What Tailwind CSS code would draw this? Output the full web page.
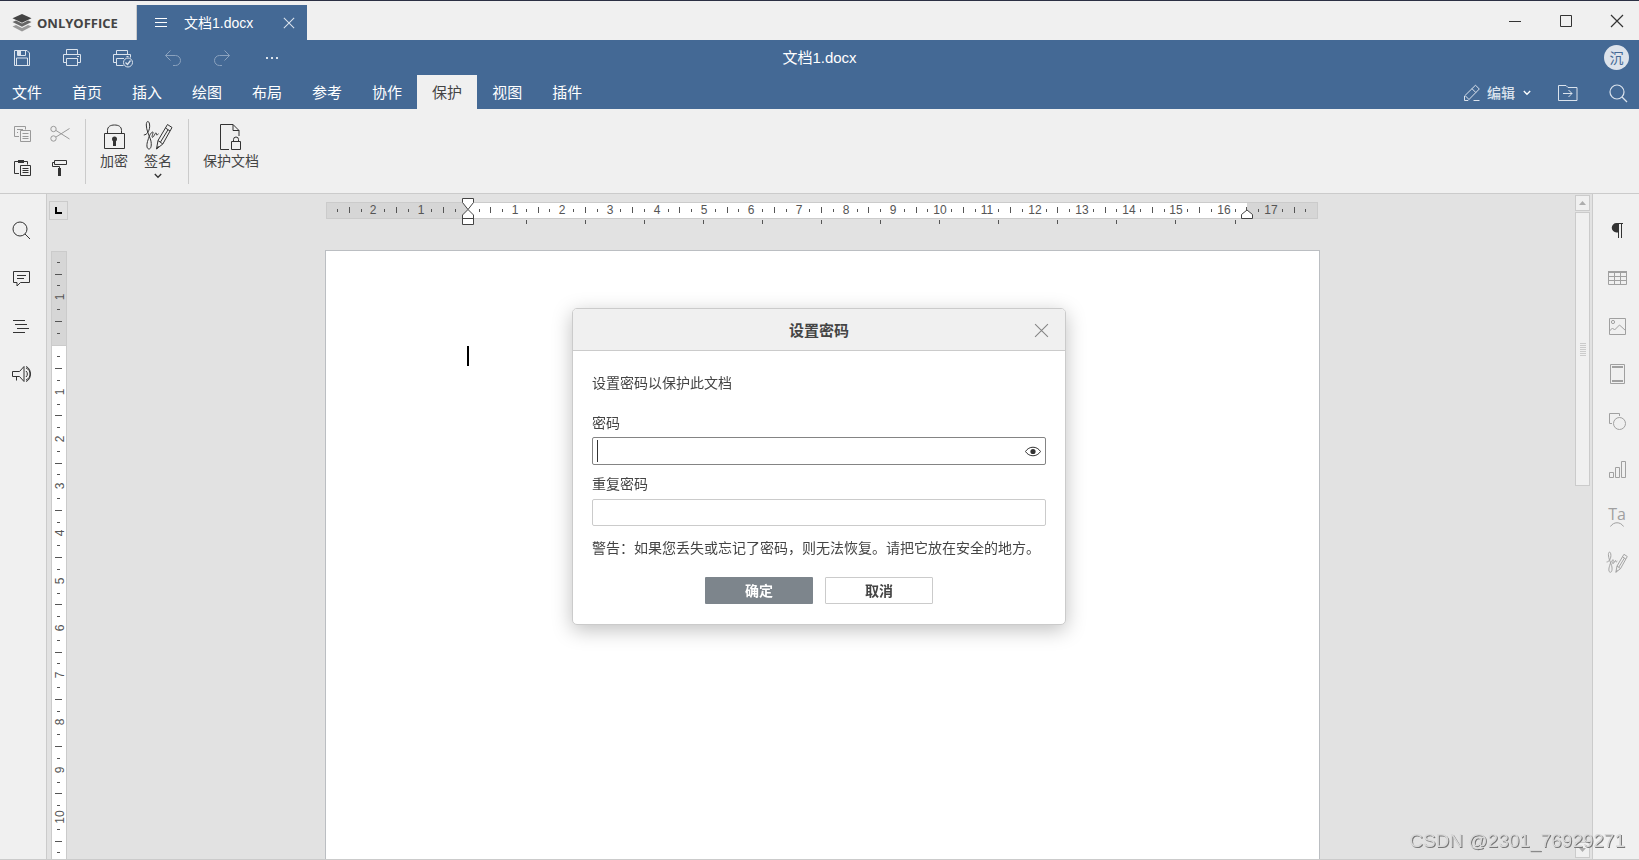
<!DOCTYPE html>
<html lang="zh-CN">
<head>
  <meta charset="UTF-8" />
  <meta name="viewport" content="width=device-width, initial-scale=1.0" />
  <title>文档1.docx - ONLYOFFICE</title>
  <script src="https://cdn.jsdelivr.net/npm/@tailwindcss/browser@4"></script>
</head>
<body class="h-screen flex flex-col overflow-hidden bg-[#f0f0f0] text-[#444] text-[14px] leading-5 font-['Liberation_Sans','Noto_Sans_CJK_SC',sans-serif]">

  <!-- shared icons -->
  <svg class="hidden">
    <symbol id="i-sign" viewBox="0 0 30 30">
      <path d="M.8 15C4 15 7.500 10 6.500 4 5.800.2 3.300.8 3.300 5 3.300 10 6 15 7.700 20 9 25 8 29 6 29 3.300 29 3.500 24 5 20 6 16 8 12.500 9.500 12 11.200 11.500 8 17.300 9.500 17.300 11 17.300 12 12.300 13.200 13 14 14 12.500 16.500 15.500 13.800M13.500 29 15 20.500 24.500 4.500 29 7.500 19.800 24ZM15 20.500 19.800 24M22.500 8 27 11M17.500 22 25 9.800M13.500 29 15.500 26" />
    </symbol>
    <symbol id="i-search" viewBox="-.5 -.5 20 20">
      <circle cx="8.500" cy="8.500" r="7" /><path d="M13.500 13.500 18.500 18.500" />
    </symbol>
    <symbol id="i-chevron" viewBox="0 0 8 6"><path d="M.8 1 4 4.300 7.200 1" /></symbol>
    <symbol id="i-close" viewBox="0 0 14 14"><path d="M1 1 13 13M13 1 1 13" /></symbol>
  </svg>

  <!-- title bar -->
  <div class="h-10 shrink-0 flex items-stretch border-t border-[#2b3044]">
    <a href="#" class="w-[137px] mt-1 flex items-center pl-3 gap-[5px] border-r border-[#cbcbcb]">
      <svg class="w-5 h-[18px]" viewBox="0 0 20 18">
        <path d="M10 0 19.500 4.300 10 8.800.5 4.300Z" fill="#444" />
        <path d="M.5 8 4 6.600 10 9.600 16 6.600 19.500 8 10 12.700Z" fill="#666" />
        <path d="M.5 12.500 4 11 10 14 16 11 19.500 12.500 10 17.500Z" fill="#999" />
      </svg>
      <span class="font-['Open_Sans'] font-bold text-[13px]">ONLYOFFICE</span>
    </a>
    <div class="w-[170px] mt-1 flex items-center bg-[#446995] text-white pl-[18px] pr-3">
      <svg class="w-3 h-3" viewBox="0 0 12 12" stroke="#fff"><path d="M0 1.500h12M0 5.500h12M0 9.500h12" /></svg>
      <span class="ml-[17px] flex-1">文档1.docx</span>
      <button aria-label="关闭标签"><svg class="w-3 h-3" stroke="#dbe3ed" stroke-width="1.200" fill="none"><use href="#i-close" /></svg></button>
    </div>
    <div class="flex-1"></div>
    <div class="flex gap-[7px] text-[#333]">
      <button aria-label="最小化" class="w-11 grid place-items-center"><svg class="w-[14px] h-[14px]" viewBox="0 0 14 14" stroke="currentColor"><path d="M1 7.500h12" /></svg></button>
      <button aria-label="最大化" class="w-11 grid place-items-center"><svg class="w-[14px] h-[14px]" viewBox="0 0 14 14" stroke="currentColor" fill="none"><path d="M1.500 1.500h11v11h-11z" /></svg></button>
      <button aria-label="关闭" class="w-11 grid place-items-center"><svg class="w-[14px] h-[14px]" stroke="currentColor" stroke-width="1.200" fill="none"><use href="#i-close" /></svg></button>
    </div>
  </div>

  <!-- header -->
  <header class="shrink-0 bg-[#446995] text-white">
    <div class="h-[35px] grid grid-cols-[1fr_auto_1fr] items-center">
      <div class="flex gap-6 pl-[9px] text-[#dbe3ed]">
        <button aria-label="保存" class="w-[26px] h-[26px] grid place-items-center">
          <svg class="w-5 h-5" viewBox="0 0 20 20" stroke="currentColor" fill="none"><path d="M2.500 2.500h12.500l2.500 2.500v12.500h-15zM4.500 17.500v-7.500h11v7.500M5.500 2.500v5h8v-5" /><path d="M6 3h3v4H6z" fill="currentColor" stroke="none" /></svg>
        </button>
        <button aria-label="打印" class="w-[26px] h-[26px] grid place-items-center">
          <svg class="w-5 h-5" viewBox="0 0 20 20" stroke="currentColor" fill="none"><path d="M4.500 6.500v-5h11v5M4.500 14.500h-3v-8h17v8h-3M4.500 10.500h11v7h-11zM15 8.500h2" /></svg>
        </button>
        <button aria-label="快速打印" class="w-[26px] h-[26px] grid place-items-center">
          <svg class="w-5 h-5 overflow-visible" viewBox="0 0 20 20" stroke="currentColor" fill="none"><path d="M4.500 7v-4.500h11v4.500M4.500 14.500h-3v-8h17v3M12 10.500h-7.500v7h7M14.500 8.500h2" /><circle cx="16" cy="14.500" r="4.500" /><path d="M13.500 14.500 15.500 16.500 18.500 12.500" stroke-width="1.300" /></svg>
        </button>
        <button aria-label="撤消" class="w-[26px] h-[26px] grid place-items-center text-[#8ba2be]">
          <svg class="w-5 h-5" viewBox="0 0 20 20" stroke="currentColor" fill="none"><path d="M8.500 2.500 3.500 7.500 8.500 12.500M3.500 7.500h10a5 5 0 0 1 0 10H11" /></svg>
        </button>
        <button aria-label="重做" class="w-[26px] h-[26px] grid place-items-center text-[#8ba2be]">
          <svg class="w-5 h-5" viewBox="0 0 20 20" stroke="currentColor" fill="none"><path d="M12.500 2.500 17.500 7.500 12.500 12.500M17.500 7.500H7.500a5 5 0 0 0 0 10H10" /></svg>
        </button>
        <button aria-label="更多" class="w-[26px] h-[26px] grid place-items-center">
          <svg class="w-5 h-5" viewBox="0 0 20 20" fill="currentColor"><path d="M4 9h2v2H4zM9 9h2v2H9zM14 9h2v2h-2z" /></svg>
        </button>
      </div>
      <h1 class="text-[15px]">文档1.docx</h1>
      <div class="flex justify-end pr-[10px]">
        <button class="w-[25px] h-[25px] rounded-full bg-[#dde3eb] text-[#446995] grid place-items-center">沉</button>
      </div>
    </div>
    <div class="h-[34px] flex items-stretch">
      <nav class="flex text-[15px]">
        <button class="pl-3 pr-[15px] pt-px">文件</button>
        <button class="px-[15px] pt-px">首页</button>
        <button class="px-[15px] pt-px">插入</button>
        <button class="px-[15px] pt-px">绘图</button>
        <button class="px-[15px] pt-px">布局</button>
        <button class="px-[15px] pt-px">参考</button>
        <button class="px-[15px] pt-px">协作</button>
        <button class="px-[15px] pt-px bg-[#f0f0f0] text-[#444]">保护</button>
        <button class="px-[15px] pt-px">视图</button>
        <button class="px-[15px] pt-px">插件</button>
      </nav>
      <div class="flex-1"></div>
      <div class="flex items-center pt-px pr-[11px] text-[#dbe3ed]">
        <button class="flex items-center mr-[27px]">
          <svg class="w-[18px] h-[18px] mr-[6px]" viewBox="0 0 18 18" stroke="currentColor" fill="none"><path d="M1.500 16.500v-4.500L12.500 1.200 16.300 5 5 16.500ZM9 4.700 12.800 8.500M2.500 12 5.500 15M10.500 16.500h6" /></svg>
          <span class="font-medium">编辑</span>
          <svg class="w-2 h-[6px] ml-2" stroke="#fff" stroke-width="1.300" fill="none"><use href="#i-chevron" /></svg>
        </button>
        <button aria-label="打开文件位置" class="mr-[30px]">
          <svg class="w-5 h-[18px]" viewBox="0 0 20 18" stroke="currentColor" fill="none"><path d="M.5 16.500v-15h7.500l2 2h9v13zM5 9.500h9M10.500 6l3.500 3.500-3.500 3.500" /></svg>
        </button>
        <button aria-label="搜索"><svg class="w-5 h-5" stroke="currentColor" stroke-width="1.200" fill="none"><use href="#i-search" /></svg></button>
      </div>
    </div>
  </header>

  <!-- ribbon -->
  <div class="h-[85px] shrink-0 flex items-center border-b border-[#cbcbcb] text-[#333]">
    <div class="grid grid-cols-2 gap-x-[9px] gap-y-[6px] pl-[9px] pr-[11px]">
      <button aria-label="复制" class="w-7 h-7 grid place-items-center text-[#999]">
        <svg class="w-[18px] h-[18px]" viewBox="0 0 18 18" stroke="currentColor" fill="none"><path d="M5 11.500H.5V1.500h11v3M3 4.500h6M3 7.500h1M6.500 5.500h10v11h-10zM8.500 8.500h6M8.500 11.500h6M8.500 13.500h6" /></svg>
      </button>
      <button aria-label="剪切" class="w-7 h-7 grid place-items-center text-[#999]">
        <svg class="w-5 h-[18px]" viewBox="0 0 20 18" stroke="currentColor" fill="none"><circle cx="3.500" cy="4" r="2.700" /><circle cx="3.500" cy="13.500" r="2.700" /><path d="M6 5.500 19.500 14M6 12 19.500 3.500" /></svg>
      </button>
      <button aria-label="粘贴" class="w-7 h-7 grid place-items-center">
        <svg class="w-[18px] h-[18px]" viewBox="0 0 18 18" stroke="currentColor" fill="none"><path d="M5 14.500H.5V2.500h3.500M10 2.500h3.500v3M6.500 6.500h10v10h-10zM8.500 9.500h6M8.500 11.500h6M8.500 13.500h6" /><path d="M4 1h6v3H4z" fill="currentColor" stroke="none" /></svg>
      </button>
      <button aria-label="复制格式" class="w-7 h-7 grid place-items-center">
        <svg class="w-[18px] h-[18px]" viewBox="0 0 18 18" stroke="currentColor" fill="none"><path d="M3.500 1.500h12v4h-12zM3.500 3.500h-2v4h7v2" /><path d="M7 9h3v8H7z" fill="currentColor" stroke="none" /></svg>
      </button>
    </div>
    <div class="w-px h-[65px] bg-[#cbcbcb]"></div>
    <button class="h-[65px] ml-[13px] flex flex-col items-center">
      <svg class="w-[30px] h-8" viewBox="0 0 30 32" stroke="currentColor" fill="none"><path d="M5.500 14.500h20v15h-20zM8.500 14.500v-3c0-4 3-5.500 7-5.500s7 1.500 7 5.500v3" /><circle cx="15.500" cy="20" r="2.500" fill="currentColor" stroke="none" /><path d="M14 21h3v6h-3z" fill="currentColor" stroke="none" /></svg>
      <span class="text-[#444]">加密</span>
    </button>
    <button class="h-[65px] ml-[14px] flex flex-col items-center">
      <svg class="w-[30px] h-8" stroke="currentColor" fill="none"><use href="#i-sign" /></svg>
      <span class="text-[#444]">签名</span>
      <svg class="w-2 h-[6px] mt-[2px]" stroke="currentColor" stroke-width="1.300" fill="none"><use href="#i-chevron" /></svg>
    </button>
    <div class="w-px h-[65px] bg-[#cbcbcb] ml-[15px]"></div>
    <button class="h-[65px] ml-[14px] flex flex-col items-center">
      <svg class="w-[30px] h-8" viewBox="0 0 30 32" stroke="currentColor" fill="none"><path d="M13 30.500H4.500v-25H17l6 6V17M17 5.500v6h6M15.500 22.500h9v8h-9zM17.500 22.500v-2a2.500 2.500 0 0 1 5 0v2" /></svg>
      <span class="text-[#444]">保护文档</span>
    </button>
  </div>

  <!-- workspace -->
  <main class="flex-1 min-h-0 flex border-b border-[#cbcbcb] bg-[#e2e2e2]">
    <aside class="w-[47px] shrink-0 pt-3 flex flex-col border-r border-[#cbcbcb] bg-[#f0f0f0] text-[#333]">
      <button aria-label="查找" class="w-[42px] h-12 grid place-items-center"><svg class="w-5 h-5" stroke="currentColor" fill="none"><use href="#i-search" /></svg></button>
      <button aria-label="批注" class="w-[42px] h-12 grid place-items-center">
        <svg class="w-5 h-5" viewBox="0 0 20 20" stroke="currentColor" fill="none"><path d="M2.500 3.500h16v11H9.500L6 18v-3.500h-3.500zM6 7.500h9M6 10.500h7" /></svg>
      </button>
      <button aria-label="标题" class="w-[42px] h-12 grid place-items-center">
        <svg class="w-5 h-5" viewBox="0 0 20 20" stroke="currentColor" fill="none"><path d="M2 4.500h12M4 8.500h12M6 12.500h12M2 16.500h12" /></svg>
      </button>
      <button aria-label="反馈" class="w-[42px] h-12 grid place-items-center">
        <svg class="w-5 h-5" viewBox="0 0 20 20" stroke="currentColor" fill="none"><path d="M1.500 7.500h7l4.500-5v15l-4.500-5h-7zM5.500 12.500v4M15 4a6.500 6.500 0 0 1 0 12M15 7a4 4 0 0 1 0 6M15 2.500c6 2 6 13 0 15" /></svg>
      </button>
    </aside>

    <div class="w-[23px] shrink-0 pl-[2px] pt-[7px] flex flex-col">
      <button aria-label="制表位" class="w-[19px] h-[19px] shrink-0 border border-[#cbcbcb] grid place-items-center">
        <svg class="w-[7px] h-[7px]" viewBox="0 0 7 7" fill="#000"><path d="M0 0h2v5h5v2H0z" /></svg>
      </button>
      <div class="flex-1 min-h-0 w-4 mt-[31px] ml-[2px] overflow-hidden border-x border-t border-[#cbcbcb] bg-white">
        <svg id="ruler-v" class="block w-[14px] h-full" fill="#555"></svg>
      </div>
    </div>

    <div class="flex-1 min-w-0 flex flex-col items-center overflow-hidden">
      <svg id="ruler-h" class="w-[995px] h-14 shrink-0" fill="#555"></svg>
      <div class="w-[995px] flex-1 border-x border-t border-[#bbbec2] bg-white pl-[141px] pt-[95px]">
        <div class="w-[2px] h-5 bg-black"></div>
      </div>
    </div>

    <!-- scrollbar -->
    <div class="w-[17px] shrink-0 pr-[2px] py-px flex flex-col">
      <button aria-label="向上滚动" class="h-4 border border-[#cbcbcb] bg-[#f0f0f0] grid place-items-center"><svg class="w-[7px] h-1" viewBox="0 0 7 4" fill="#adadad"><path d="M0 4 3.500 0 7 4z" /></svg></button>
      <div class="h-[274px] mt-px border border-[#cbcbcb] bg-[#f0f0f0] grid place-items-center">
        <svg class="w-[6px] h-[13px]" viewBox="0 0 6 13" stroke="#cbcbcb"><path d="M0 .5h6M0 2.500h6M0 4.500h6M0 6.500h6M0 8.500h6M0 10.500h6M0 12.500h6" /></svg>
      </div>
      <div class="flex-1"></div>
      <button aria-label="向下滚动" class="h-4 border border-[#cbcbcb] bg-[#f0f0f0] grid place-items-center"><svg class="w-[7px] h-1" viewBox="0 0 7 4" fill="#adadad"><path d="M0 0 3.500 4 7 0z" /></svg></button>
    </div>

    <aside class="w-[47px] shrink-0 pt-3 pl-[2px] flex flex-col border-l border-[#cbcbcb] bg-[#f0f0f0] text-[#a0a0a0]">
      <button aria-label="段落设置" class="w-11 h-12 grid place-items-center text-[#333]">
        <svg class="w-5 h-5" viewBox="0 0 20 20" fill="currentColor"><path d="M9.500 3H16v1h-1v14h-1V4h-2v14h-1v-5.500H9.500A4.500 4.500 0 0 1 9.500 3z" /></svg>
      </button>
      <button aria-label="表格设置" class="w-11 h-12 grid place-items-center">
        <svg class="w-5 h-5" viewBox="0 0 20 20" stroke="currentColor" fill="none"><path d="M1.500 4.500h18v12h-18zM1.500 8.500h18M1.500 12.500h18M7.500 4v12M13.500 4v12" /><path d="M1 3h19v2H1z" fill="currentColor" stroke="none" /></svg>
      </button>
      <button aria-label="图像设置" class="w-11 h-12 grid place-items-center">
        <svg class="w-5 h-5" viewBox="0 0 20 20" stroke="currentColor" fill="none"><path d="M2.500 2.500h16v16h-16zM2.500 15l3-3 2 2 5-5 6 5.500" /><circle cx="6" cy="6" r="1.600" /></svg>
      </button>
      <button aria-label="页眉和页脚设置" class="w-11 h-12 grid place-items-center">
        <svg class="w-5 h-5" viewBox="0 0 20 20" stroke="currentColor" fill="none"><path d="M3.500.5h14v19h-14z" /><path d="M5 2h11v2H5zM5 16h11v2H5z" fill="currentColor" stroke="none" /></svg>
      </button>
      <button aria-label="形状设置" class="w-11 h-12 grid place-items-center">
        <svg class="w-5 h-5" viewBox="0 0 20 20" stroke="currentColor" fill="none"><path d="M5 11.500H2.500v-10h10V4" /><circle cx="12.500" cy="11.500" r="6" /></svg>
      </button>
      <button aria-label="图表设置" class="w-11 h-12 grid place-items-center">
        <svg class="w-5 h-5" viewBox="0 0 20 20" stroke="currentColor" fill="none"><path d="M2.500 12.500h4v5h-4zM8.500 7.500h4v10h-4zM14.500 1.500h4v16h-4z" /></svg>
      </button>
      <button aria-label="艺术字设置" class="w-11 h-11 flex flex-col items-center justify-center">
        <span class="font-['Open_Sans'] text-[16px] leading-4">Ta</span>
        <svg class="w-[14px] h-[5px]" viewBox="0 0 14 5" stroke="currentColor" fill="none"><path d="M.5 4.500c3-5 10-5 13 0" /></svg>
      </button>
      <button aria-label="签名设置" class="w-11 h-12 grid place-items-center">
        <svg class="w-[22px] h-[22px]" stroke="currentColor" stroke-width="1.300" fill="none"><use href="#i-sign" /></svg>
      </button>
    </aside>
  </main>

  <!-- password dialog -->
  <div class="fixed inset-0 flex items-start justify-center pt-[308px] pr-px">
    <form role="dialog" aria-labelledby="dlg-title" class="w-[494px] overflow-hidden rounded-[5px] border border-[#cbcbcb] bg-white shadow-[0_5px_20px_rgba(0,0,0,0.25)]">
      <div class="h-[42px] pt-[2px] relative flex items-center justify-center border-b border-[#cbcbcb] bg-[#f0f0f0]">
        <h2 id="dlg-title" class="text-[15px] font-bold">设置密码</h2>
        <button type="button" aria-label="关闭" class="absolute right-4"><svg class="w-[15px] h-[15px]" stroke="#858585" fill="none"><use href="#i-close" /></svg></button>
      </div>
      <div class="px-[19px] pt-[22px] pb-5">
        <p>设置密码以保护此文档</p>
        <label for="password" class="block mt-5">密码</label>
        <div class="relative mt-1">
          <input type="password" id="password" class="block w-full h-7 rounded-[2px] border border-[#848484] bg-white pl-1 pr-8 outline-none" />
          <span class="absolute left-[5px] top-[3px] w-px h-[22px] bg-[#333]"></span>
          <button type="button" aria-label="显示密码" class="absolute right-[5px] top-[9px]">
            <svg class="w-4 h-[11px]" viewBox="0 0 16 11" stroke="#333" fill="none"><path d="M.5 5.500C4-.2 12-.2 15.500 5.500 12 11.200 4 11.200.5 5.500z" /><circle cx="8" cy="5.500" r="2.600" fill="#333" stroke="none" /></svg>
          </button>
        </div>
        <label for="repeat" class="block mt-[9px]">重复密码</label>
        <input type="password" id="repeat" class="block w-full h-[27px] mt-[5px] rounded-[2px] border border-[#cbcbcb] bg-white px-1" />
        <p class="mt-3 whitespace-nowrap">警告：如果您丢失或忘记了密码，则无法恢复。请把它放在安全的地方。</p>
        <div class="mt-[19px] flex justify-center gap-3 font-bold">
          <button type="submit" class="w-[108px] h-[27px] rounded-[1px] bg-[#7d858c] text-white">确定</button>
          <button type="button" class="w-[108px] h-[27px] rounded-[1px] border border-[#cbcbcb] bg-white">取消</button>
        </div>
      </div>
    </form>
  </div>

  <div class="fixed right-[14px] bottom-[7px] text-[19px] leading-6 text-[#d8d8d8] [text-shadow:1px_1px_0_#777]">CSDN @2301_76929271</div>

  <script>
    const CM = 120 / 2.54; // px per cm at 125%
    const NS = "http://www.w3.org/2000/svg";

    function add(parent, tag, attrs, text) {
      const el = document.createElementNS(NS, tag);
      for (const k in attrs) el.setAttribute(k, attrs[k]);
      if (text !== undefined) el.textContent = text;
      parent.appendChild(el);
    }

    // horizontal ruler: zero at x = 143, bar from y = 8 to 25
    const h = document.getElementById("ruler-h");
    add(h, "rect", { x: 1.5, y: 8.5, width: 991, height: 16, fill: "#d6d6d6", stroke: "#cbcbcb" });
    add(h, "rect", { x: 143, y: 9, width: 779, height: 15, fill: "#fff" });
    for (let q = -11; q <= 71; q++) {
      if (q === 0) continue;
      const x = Math.floor(142.3 + q * CM / 4);
      if (q % 4 === 0) {
        add(h, "text", { x: x + 1, y: 20, "text-anchor": "middle", "font-size": 12 }, Math.abs(q / 4));
      } else if (q % 2 === 0) {
        add(h, "rect", { x: x, y: 13, width: 1, height: 6 });
      } else {
        add(h, "rect", { x: x, y: 15, width: 1, height: 3 });
      }
    }
    for (let t = 1; t <= 13; t++) {
      add(h, "rect", { x: Math.floor(142.3 + t * 1.25 * CM), y: 26, width: 1, height: 4 });
    }
    const mark = { fill: "#fff", stroke: "#444" };
    add(h, "path", { d: "M137.500 4.500h11v4L143 15.500 137.500 8.500z", ...mark });
    add(h, "path", { d: "M143 15.500 148.500 21v9.500h-11V21zM137.500 24.500h11", ...mark });
    add(h, "path", { d: "M922 16 927.500 20.500v4h-11v-4z", ...mark });

    // vertical ruler: zero at y = 93, drawn as far as the window reaches
    const v = document.getElementById("ruler-v");
    const bottom = window.innerHeight - 253;
    add(v, "rect", { x: 0, y: 0, width: 14, height: 93, fill: "#d6d6d6" });
    add(v, "rect", { x: 0, y: 93, width: 14, height: 1, fill: "#cbcbcb" });
    for (let q = -7; 93 + q * CM / 4 < bottom; q++) {
      if (q === 0) continue;
      const y = Math.floor(93 + q * CM / 4);
      if (q % 4 === 0) {
        add(v, "text", { transform: `translate(12 ${y}) rotate(-90)`, "text-anchor": "middle", "font-size": 12 }, Math.abs(q / 4));
      } else if (q % 2 === 0) {
        add(v, "rect", { x: 3, y: y, width: 7, height: 1 });
      } else {
        add(v, "rect", { x: 5, y: y, width: 3, height: 1 });
      }
    }
  </script>
</body>
</html>
